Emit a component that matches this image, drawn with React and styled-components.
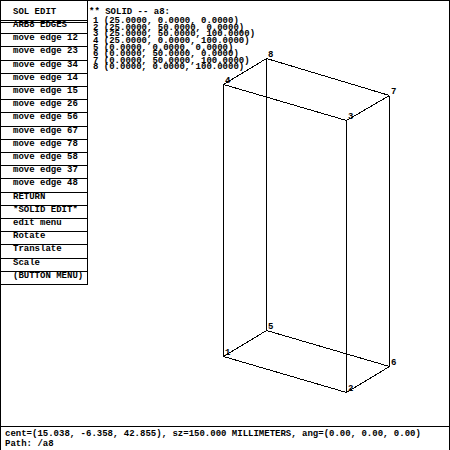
import React from "react";
import styled, { createGlobalStyle } from "styled-components";

const INK = "#000";
const PAPER = "#fff";

const GlobalStyle = createGlobalStyle`
  * { box-sizing: border-box; }
  body {
    margin: 0;
    background: ${PAPER};
    color: ${INK};
    font: bold 9px/10px "Liberation Mono", "Courier New", monospace;
  }
`;

const Screen = styled.main`
  display: flex;
  flex-direction: column;
  min-height: 100vh;
  border: 1px solid ${INK};
  border-bottom: 0;
`;

const Workspace = styled.section`
  flex: 1;
  display: grid;
  grid-template-columns: 87px 1fr;
  grid-template-rows: 1fr;
  align-items: start;
`;

const Menu = styled.nav`
  grid-area: 1 / 1;
  z-index: 1;
  border-right: 1px solid ${INK};
  border-bottom: 1px solid ${INK};
`;

const MenuTitle = styled.h1`
  height: 19px;
  margin: 0;
  padding: 6px 0 0 12px;
  font: inherit;
  line-height: 10px;
`;

const MenuList = styled.ul`
  display: grid;
  grid-auto-rows: 1fr;
  height: 264px;
  margin: 0;
  padding: 0;
  list-style: none;
`;

const MenuRow = styled.li`
  border-top: 1px solid ${INK};
  background: ${({ $heading }) =>
    $heading ? `linear-gradient(${INK}, ${INK}) 0 1px / 100% 1px no-repeat` : "none"};
`;

const MenuButton = styled.button`
  display: block;
  width: 100%;
  height: 100%;
  padding: 0 0 4px 12px;
  border: 0;
  background: none;
  color: inherit;
  font: inherit;
  line-height: 8px;
  text-align: left;
  white-space: nowrap;
`;

const Readout = styled.section`
  grid-area: 1 / 2;
  z-index: 1;
  padding: 6px 0 0 1px;
  white-space: pre;
`;

const ReadoutTitle = styled.h2`
  margin: 0;
  font: inherit;
`;

const Coordinates = styled.ol`
  display: grid;
  grid-auto-rows: minmax(0, 1fr);
  height: 54px;
  margin: 0;
  padding: 1px 0 0 4px;
  line-height: 7px;
  list-style: none;
`;

const Drawing = styled.svg`
  grid-area: 1 / 1 / 2 / 3;
  display: block;
  width: 100%;
  height: 100%;
  min-height: 0;
`;

const Edge = styled.line`
  stroke: ${INK};
  stroke-width: 1;
  shape-rendering: crispEdges;
`;

const VertexLabel = styled.text`
  fill: ${INK};
`;

const Status = styled.footer`
  padding: 2px 4px 2px 4px;
  border-top: 1px solid ${INK};
  white-space: nowrap;
`;

const StatusLine = styled.p`
  margin: 0;
`;

const MENU_ITEMS = [
  "ARB8 EDGES",
  ...["12", "23", "34", "14", "15", "26", "56", "67", "78", "58", "37", "48"].map(
    (edge) => `move edge ${edge}`
  ),
  "RETURN",
  "*SOLID EDIT*",
  "edit menu",
  "Rotate",
  "Translate",
  "Scale",
  "(BUTTON MENU)",
];

const POINTS = [
  "(25.0000, 0.0000, 0.0000)",
  "(25.0000, 50.0000, 0.0000)",
  "(25.0000, 50.0000, 100.0000)",
  "(25.0000, 0.0000, 100.0000)",
  "(0.0000, 0.0000, 0.0000)",
  "(0.0000, 50.0000, 0.0000)",
  "(0.0000, 50.0000, 100.0000)",
  "(0.0000, 0.0000, 100.0000)",
];

const VERTICES = {
  1: [223, 356],
  2: [346, 392],
  3: [346, 120],
  4: [223, 84],
  5: [266, 330],
  6: [389, 366],
  7: [389, 95],
  8: [266, 58],
};

const EDGES = [
  [1, 2], [2, 3], [3, 4], [1, 4], [1, 5], [2, 6],
  [5, 6], [6, 7], [7, 8], [5, 8], [3, 7], [4, 8],
];

export default function App() {
  return (
    <>
      <GlobalStyle />
      <Screen>
        <Workspace>
          <Menu aria-label="Solid edit">
            <MenuTitle>SOL EDIT</MenuTitle>
            <MenuList>
              {MENU_ITEMS.map((label, index) => (
                <MenuRow key={label} $heading={index === 0}>
                  <MenuButton type="button">{label}</MenuButton>
                </MenuRow>
              ))}
            </MenuList>
          </Menu>
          <Readout>
            <ReadoutTitle>** SOLID -- a8:</ReadoutTitle>
            <Coordinates>
              {POINTS.map((point, index) => (
                <li key={point}>{`${index + 1} ${point}`}</li>
              ))}
            </Coordinates>
          </Readout>
          <Drawing viewBox="1 1 448 425" role="img" aria-label="Wireframe of solid a8">
            {EDGES.map(([from, to]) => (
              <Edge
                key={`${from}${to}`}
                x1={VERTICES[from][0] + 0.5}
                y1={VERTICES[from][1] + 0.5}
                x2={VERTICES[to][0] + 0.5}
                y2={VERTICES[to][1] + 0.5}
              />
            ))}
            {Object.entries(VERTICES).map(([name, [x, y]]) => (
              <VertexLabel key={name} x={x + 2} y={y - 1}>
                {name}
              </VertexLabel>
            ))}
          </Drawing>
        </Workspace>
        <Status>
          <StatusLine>
            cent=(15.038, -6.358, 42.855), sz=150.000 MILLIMETERS, ang=(0.00, 0.00, 0.00)
          </StatusLine>
          <StatusLine>Path: /a8</StatusLine>
        </Status>
      </Screen>
    </>
  );
}
